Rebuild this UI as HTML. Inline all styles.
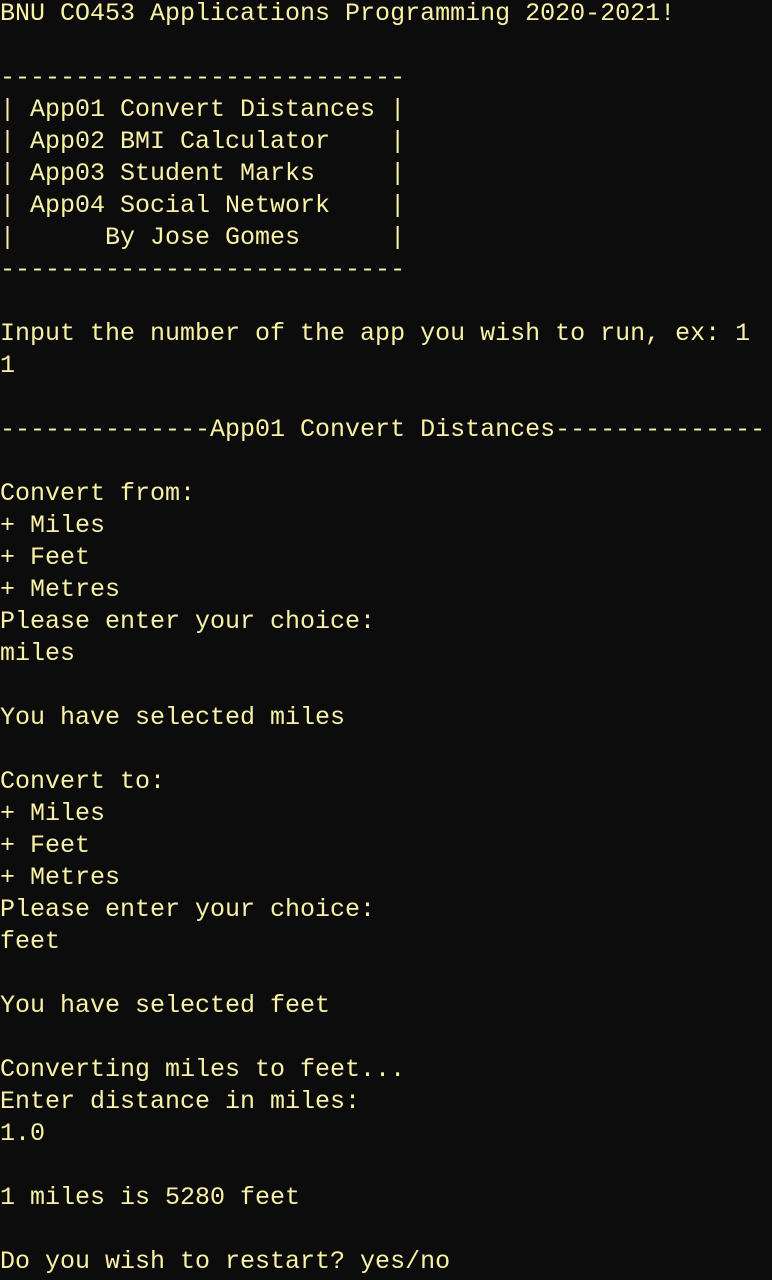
<!DOCTYPE html>
<html><head><meta charset="utf-8"><style>
html,body{margin:0;padding:0;background:#0c0c0c;width:772px;height:1280px;overflow:hidden}
pre{margin:0;position:absolute;top:-2px;left:0;font-family:"Liberation Mono",monospace;font-size:25px;line-height:32px;color:#f9f1a5;white-space:pre}
</style></head><body><pre>BNU CO453 Applications Programming 2020-2021!

---------------------------
| App01 Convert Distances |
| App02 BMI Calculator    |
| App03 Student Marks     |
| App04 Social Network    |
|      By Jose Gomes      |
---------------------------

Input the number of the app you wish to run, ex: 1
1

--------------App01 Convert Distances--------------

Convert from:
+ Miles
+ Feet
+ Metres
Please enter your choice:
miles

You have selected miles

Convert to:
+ Miles
+ Feet
+ Metres
Please enter your choice:
feet

You have selected feet

Converting miles to feet...
Enter distance in miles:
1.0

1 miles is 5280 feet

Do you wish to restart? yes/no</pre></body></html>
